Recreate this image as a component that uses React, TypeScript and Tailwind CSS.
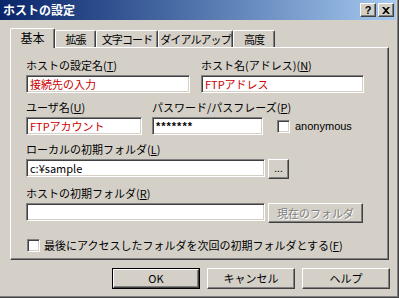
import React from "react";

const sunken =
  "border border-t-[#808080] border-l-[#808080] border-b-white border-r-white shadow-[inset_1px_1px_0_#404040,inset_-1px_-1px_0_#d4d0c8] bg-white";
const raised =
  "border border-t-white border-l-white border-b-[#404040] border-r-[#404040] shadow-[inset_-1px_-1px_0_#808080] bg-[#d4d0c8]";

function Field({ value, red, className }: { value: string; red?: boolean; className: string }) {
  return (
    <div className={`${sunken} ${className} h-[18px] flex items-center pl-[3px] text-[11px] leading-none whitespace-nowrap ${red ? "text-[#cc0000]" : "text-black"}`}>
      {value}
    </div>
  );
}

function Label({ children }: { children: React.ReactNode }) {
  return <div className="h-[14px] leading-[14px] mb-[3px] whitespace-nowrap">{children}</div>;
}

function Check() {
  return <div className={`${sunken} w-[13px] h-[13px] shrink-0`} />;
}

function Button({ children, isDefault, className }: { children: React.ReactNode; isDefault?: boolean; className: string }) {
  if (isDefault) {
    return (
      <div className={`border border-black ${className}`}>
        <div className={`${raised} w-full h-full flex items-center justify-center`}>{children}</div>
      </div>
    );
  }
  return <div className={`${raised} ${className} flex items-center justify-center whitespace-nowrap`}>{children}</div>;
}

export default function App() {
  const tabs = [
    { label: "基本", w: "w-[45px]", active: true },
    { label: "拡張", w: "w-[41px]" },
    { label: "文字コード", w: "w-[62px]" },
    { label: "ダイアルアップ", w: "w-[75px]" },
    { label: "高度", w: "w-[42px]" },
  ];

  return (
    <div className="w-[399px] h-[298px] bg-[#d4d0c8] text-black text-[11px] font-['Noto_Sans_CJK_JP',sans-serif] border-r border-b border-r-[#404040] border-b-[#404040] overflow-hidden">
      <div className="h-full border-r border-b border-r-[#808080] border-b-[#808080]">
        {/* Title bar */}
        <div className="h-[20px] mr-[1px] bg-linear-to-r from-[#0a246a] to-[#a6caf0] flex items-center pl-[3px] pr-[2px]">
          <span className="text-white font-bold text-[12px] leading-none flex-1">ホストの設定</span>
          <div className={`${raised} w-[16px] h-[14px] flex items-center justify-center text-[11px] font-bold leading-none font-['Liberation_Sans',sans-serif]`}>
            ?
          </div>
          <div className={`${raised} w-[16px] h-[14px] ml-[2px] flex items-center justify-center`}>
            <svg width="8" height="7" viewBox="0 0 8 7">
              <path d="M0 0h2l2 2 2-2h2L5 3.5 8 7H6L4 5 2 7H0l3-3.5z" fill="#000" />
            </svg>
          </div>
        </div>

        {/* Tabs */}
        <div className="pl-[10px] pt-[9px]">
          <div className="flex items-end h-[18px]">
            {tabs.map((t) =>
              t.active ? (
                <div
                  key={t.label}
                  className={`${t.w} h-[20px] -mb-[1px] relative z-10 bg-[#d4d0c8] border-l border-t border-l-white border-t-white border-r border-r-[#404040] shadow-[inset_-1px_0_0_#808080] rounded-t-[2px] flex items-center justify-center pb-[2px] whitespace-nowrap text-[12px]`}
                >
                  {t.label}
                </div>
              ) : (
                <div
                  key={t.label}
                  className={`${t.w} h-[17px] border-l border-t border-l-white border-t-white border-r border-r-[#404040] shadow-[inset_-1px_0_0_#808080] rounded-t-[2px] flex items-center justify-center whitespace-nowrap text-[11px] tracking-[-0.9px]`}
                >
                  {t.label}
                </div>
              )
            )}
          </div>

          {/* Panel */}
          <div className="w-[379px] h-[213px] border border-t-white border-l-white border-r-[#404040] border-b-[#404040] shadow-[inset_-1px_-1px_0_#808080] pl-[15px] pt-[10px]">
            <div className="flex">
              <div className="w-[164px]">
                <Label>ホストの設定名(<u>T</u>)</Label>
                <Field value="接続先の入力" red className="w-[164px]" />
              </div>
              <div className="ml-[11px]">
                <Label>ホスト名(アドレス)(<u>N</u>)</Label>
                <Field value="FTPアドレス" red className="w-[163px]" />
              </div>
            </div>

            <div className="flex mt-[7px]">
              <div className="w-[116px] shrink-0">
                <Label>ユーザ名(<u>U</u>)</Label>
                <Field value="FTPアカウント" red className="w-[116px]" />
              </div>
              <div className="ml-[10px] w-[111px] shrink-0">
                <Label>パスワード/パスフレーズ(<u>P</u>)</Label>
                <Field value="*******" className="w-[111px] font-['Liberation_Sans',sans-serif] font-bold tracking-[1px]" />
              </div>
              <div className="self-end h-[18px] ml-[14px] flex items-center">
                <Check />
                <span className="ml-[5px] text-[11px] font-['Liberation_Sans',sans-serif] whitespace-nowrap">anonymous</span>
              </div>
            </div>

            <div className="mt-[7px]">
              <Label>ローカルの初期フォルダ(<u>L</u>)</Label>
              <div className="flex items-start">
                <Field value="c:¥sample" className="w-[239px]" />
                <Button className="w-[21px] h-[20px] ml-[3px] text-[10px] leading-none pb-[3px]">...</Button>
              </div>
            </div>

            <div className="mt-[7px]">
              <Label>ホストの初期フォルダ(<u>R</u>)</Label>
              <div className="flex items-start">
                <Field value="" className="w-[239px]" />
                <Button className="w-[95px] h-[20px] ml-[3px] text-[#808080] [text-shadow:1px_1px_0_#fff]">現在のフォルダ</Button>
              </div>
            </div>

            <div className="flex items-center mt-[15px] ml-[1px]">
              <Check />
              <span className="ml-[4px] leading-[14px] whitespace-nowrap">最後にアクセスしたフォルダを次回の初期フォルダとする(<u>F</u>)</span>
            </div>
          </div>

          {/* Bottom buttons */}
          <div className="flex mt-[8px] ml-[102px]">
            <Button isDefault className="w-[88px] h-[21px]">OK</Button>
            <Button className="w-[88px] h-[21px] ml-[7px]">キャンセル</Button>
            <Button className="w-[88px] h-[21px] ml-[7px]">ヘルプ</Button>
          </div>
        </div>
      </div>
    </div>
  );
}
